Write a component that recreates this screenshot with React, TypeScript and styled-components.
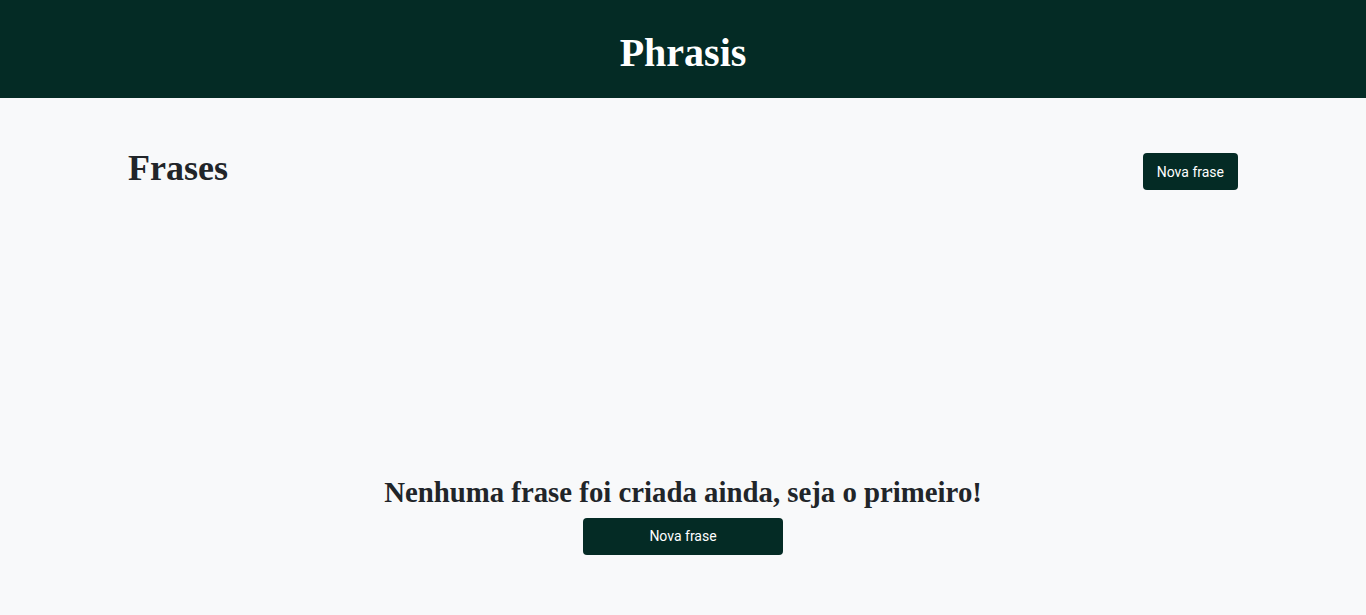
import React from "react";
import styled, { createGlobalStyle } from "styled-components";

const GlobalStyle = createGlobalStyle`
  html, body { margin: 0; padding: 0; }
  body {
    background: #f8f9fa;
    color: #212529;
    font-family: "Liberation Serif", serif;
  }
  * { box-sizing: border-box; }
`;

const Header = styled.header`
  height: 98px;
  padding-top: 8px;
  background: #042b25;
  display: flex;
  align-items: center;
  justify-content: center;
`;

const Brand = styled.h1`
  margin: 0;
  color: #ffffff;
  font-family: "Liberation Serif", serif;
  font-weight: 700;
  font-size: 40px;
  line-height: 1.2;
`;

const Container = styled.main`
  max-width: 1110px;
  margin: 0 auto;
`;

const TitleRow = styled.div`
  margin-top: 55px;
  display: flex;
  align-items: center;
  justify-content: space-between;
  height: 37px;
`;

const PageTitle = styled.h2`
  margin: 0 0 6px;
  font-family: "Liberation Serif", serif;
  font-weight: 700;
  font-size: 36px;
  line-height: 1.2;
  color: #212529;
`;

const Button = styled.button<{ $wide?: boolean }>`
  height: 37px;
  width: ${(p) => (p.$wide ? "200px" : "auto")};
  padding: 0 14px;
  border: none;
  border-radius: 4px;
  background: #042b25;
  color: #ffffff;
  font-family: Roboto, "Liberation Sans", sans-serif;
  font-size: 14px;
  cursor: pointer;
`;

const Empty = styled.section`
  margin-top: 285px;
  display: flex;
  flex-direction: column;
  align-items: center;
  gap: 8px;
`;

const EmptyText = styled.h3`
  margin: 0;
  font-family: "Liberation Serif", serif;
  font-weight: 700;
  font-size: 28.8px;
  line-height: 1.2;
  color: #212529;
`;

export default function App() {
  return (
    <>
      <GlobalStyle />
      <Header>
        <Brand>Phrasis</Brand>
      </Header>
      <Container>
        <TitleRow>
          <PageTitle>Frases</PageTitle>
          <Button>Nova frase</Button>
        </TitleRow>
        <Empty>
          <EmptyText>Nenhuma frase foi criada ainda, seja o primeiro!</EmptyText>
          <Button $wide>Nova frase</Button>
        </Empty>
      </Container>
    </>
  );
}
